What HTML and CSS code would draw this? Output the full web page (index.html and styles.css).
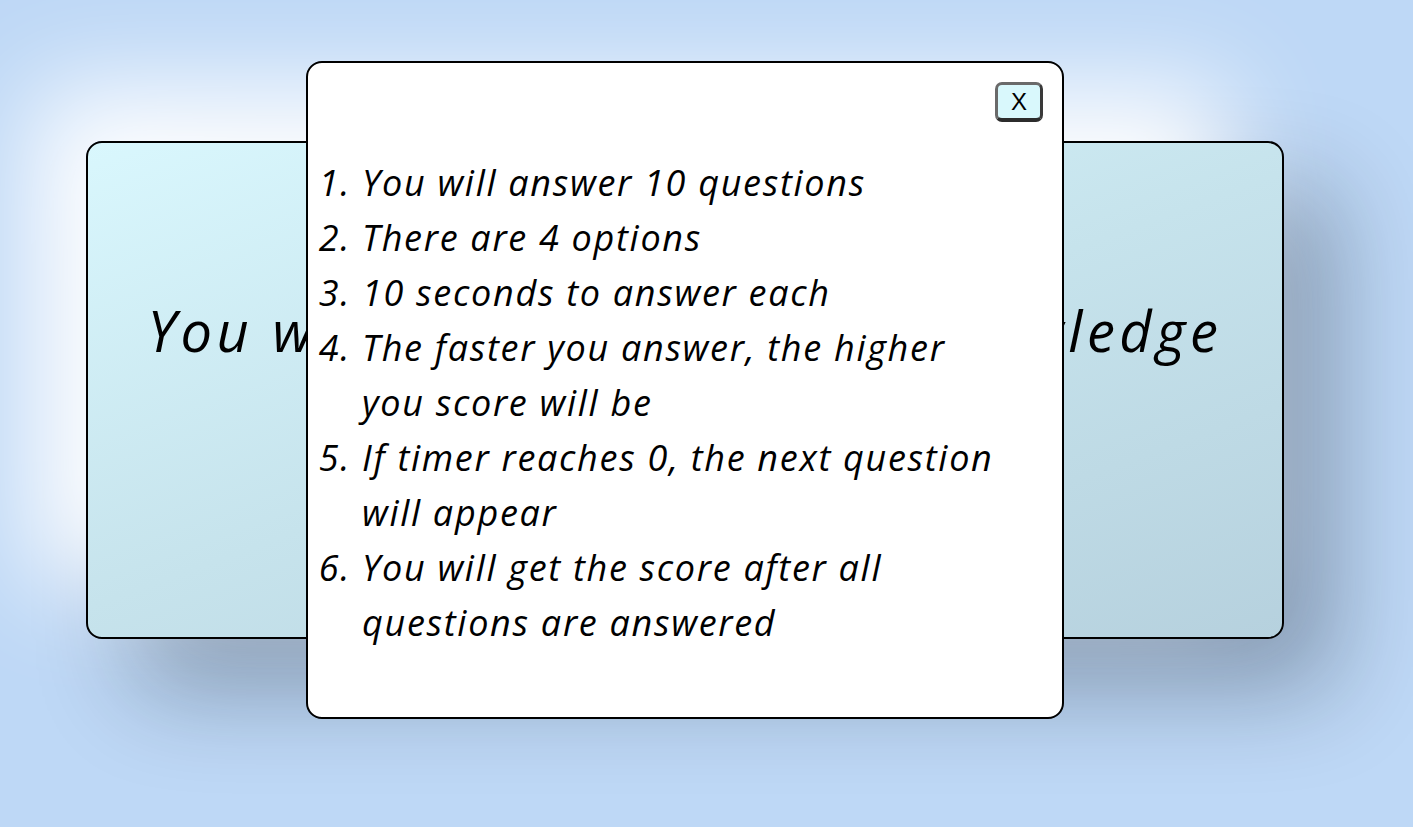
FILE: index.html
```html
<!DOCTYPE html>
<html lang="en">
<head>
<meta charset="utf-8">
<title>Quiz rules</title>
<link rel="stylesheet" href="styles.css">
</head>
<body>
<main class="stage">
  <section class="card">
    <h1 class="card-title">You will be tested on your knowledge</h1>
  </section>
  <div class="modal" role="dialog">
    <div class="modal-head">
      <button class="close-btn" type="button">X</button>
    </div>
    <ol class="rules">
      <li>You will answer 10 questions</li>
      <li>There are 4 options</li>
      <li>10 seconds to answer each</li>
      <li>The faster you answer, the higher you score will be</li>
      <li>If timer reaches 0, the next question will appear</li>
      <li>You will get the score after all questions are answered</li>
    </ol>
  </div>
</main>
</body>
</html>
```
FILE: styles.css
```css
html, body {
  margin: 0;
  padding: 0;
  height: 100%;
}
body {
  background: #bed8f6;
  font-family: "Open Sans", "Noto Sans", sans-serif;
  overflow: hidden;
}
.stage {
  height: 100vh;
  box-sizing: border-box;
  padding: 0 43px 47px 0;
  display: grid;
  place-items: center;
}
.card {
  grid-area: 1 / 1;
  width: 1198px;
  height: 498px;
  box-sizing: border-box;
  border: 2px solid #000;
  border-radius: 16px;
  background: linear-gradient(160deg, #d9f7fd 0%, #c6e3ec 50%, #b6d1de 100%);
  box-shadow: -55px -55px 105px #ffffff, 50px 50px 100px rgba(10, 20, 30, 0.32);
  padding-top: 146px;
}
.card-title {
  margin: 0;
  text-align: center;
  font-style: italic;
  font-weight: 400;
  font-size: 56px;
  letter-spacing: 4.6px;
  line-height: 82px;
  white-space: nowrap;
  color: #000;
}
.modal {
  grid-area: 1 / 1;
  width: 758px;
  height: 658px;
  box-sizing: border-box;
  background: #fff;
  border: 2px solid #000;
  border-radius: 16px;
  padding: 19px 19px;
}
.modal-head {
  display: flex;
  justify-content: flex-end;
}
.close-btn {
  width: 48px;
  height: 40px;
  box-sizing: border-box;
  background: #d9f8fc;
  border: 3px solid #6a6a6a;
  border-right-color: #3a3a3a;
  border-bottom-color: #2c2c2c;
  border-bottom-width: 4px;
  border-radius: 7px;
  font-family: "Liberation Sans", Arial, sans-serif;
  font-size: 24px;
  line-height: 1;
  color: #000;
  padding: 0;
}
.rules {
  margin: 33px 0 0;
  padding: 0 26px 0 35px;
  font-style: italic;
  font-size: 36px;
  letter-spacing: 1.7px;
  line-height: 55px;
  color: #000;
}
```
